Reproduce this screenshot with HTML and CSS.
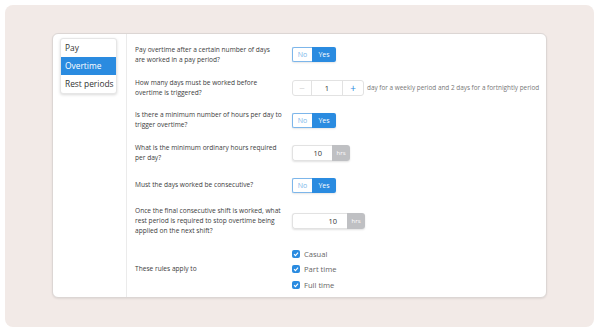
FILE: index.html
```html
<!DOCTYPE html>
<html lang="en">

<head>
    <meta charset="UTF-8">
    <meta name="viewport" content="width=device-width, initial-scale=1.0">
    <title>Overtime rules</title>
    <link rel="stylesheet" href="styles.css">
</head>

<body>

    <div class="panel">
        <div class="card">
            <div class="sidebar">
                <div class="menu">
                    <a class="menu_item">Pay</a>
                    <a class="menu_item active">Overtime</a>
                    <a class="menu_item">Rest periods</a>
                </div>
            </div>

            <div class="content">
                <div class="row row-1">
                    <p class="question">Pay overtime after a certain number of days<br>are worked in a pay period?</p>
                    <div class="toggle">
                        <span class="toggle_no">No</span>
                        <span class="toggle_yes">Yes</span>
                    </div>
                </div>

                <div class="row row-2">
                    <p class="question">How many days must be worked before overtime is triggered?</p>
                    <div class="stepper">
                        <span class="step_btn minus">&minus;</span>
                        <span class="step_value">1</span>
                        <span class="step_btn plus">+</span>
                    </div>
                    <span class="hint">day for a weekly period and 2 days for a fortnightly period</span>
                </div>

                <div class="row row-3">
                    <p class="question">Is there a minimum number of hours per day to trigger overtime?</p>
                    <div class="toggle">
                        <span class="toggle_no">No</span>
                        <span class="toggle_yes">Yes</span>
                    </div>
                </div>

                <div class="row row-4">
                    <p class="question">What is the minimum ordinary hours required per day?</p>
                    <div class="hours">
                        <span class="hours_value">10</span>
                        <span class="hours_unit">hrs</span>
                    </div>
                </div>

                <div class="row row-5">
                    <p class="question">Must the days worked be consecutive?</p>
                    <div class="toggle">
                        <span class="toggle_no">No</span>
                        <span class="toggle_yes">Yes</span>
                    </div>
                </div>

                <div class="row row-6">
                    <p class="question">Once the final consecutive shift is worked, what rest period is required to stop overtime being applied on the next shift?</p>
                    <div class="hours wide">
                        <span class="hours_value">10</span>
                        <span class="hours_unit">hrs</span>
                    </div>
                </div>

                <div class="row row-7">
                    <p class="question">These rules apply to</p>
                    <div class="checks">
                        <label class="check"><span class="box"><svg viewBox="0 0 10 10"><path d="M2.5 5.2 L4.3 7 L7.6 3.3" /></svg></span>Casual</label>
                        <label class="check"><span class="box"><svg viewBox="0 0 10 10"><path d="M2.5 5.2 L4.3 7 L7.6 3.3" /></svg></span>Part time</label>
                        <label class="check"><span class="box"><svg viewBox="0 0 10 10"><path d="M2.5 5.2 L4.3 7 L7.6 3.3" /></svg></span>Full time</label>
                    </div>
                </div>
            </div>
        </div>
    </div>

</body>

</html>
```

FILE: styles.css
```css
body {
    font-family: "Open Sans", "DejaVu Sans", sans-serif;
    margin: 0;
    padding: 0;
    background-color: #ffffff;
}

.panel {
    margin: 5px;
    width: 589px;
    height: 322px;
    box-sizing: border-box;
    padding: 28px 0 0 47px;
    background-color: #f2eae7;
    border-radius: 8px;
}

.card {
    display: flex;
    width: 495px;
    height: 265px;
    box-sizing: border-box;
    background-color: #ffffff;
    border: 1px solid #dcd6d4;
    border-radius: 6px;
    box-shadow: 0 1px 2px rgba(0, 0, 0, 0.08);
}

.sidebar {
    width: 74px;
    flex-shrink: 0;
    border-right: 1px solid #ebebeb;
    padding: 4px 0 0 7px;
    box-sizing: border-box;
}

.menu {
    display: flex;
    flex-direction: column;
    width: 55px;
    background-color: #ffffff;
    border: 1px solid #e6e6e6;
    border-radius: 3px;
    box-shadow: 0 1px 3px rgba(0, 0, 0, 0.15);
}

.menu_item {
    height: 18px;
    line-height: 18px;
    padding-left: 4px;
    font-size: 8.4px;
    color: #333;
}

.menu_item.active {
    background-color: #2a8be0;
    color: #ffffff;
}

.content {
    flex: 1;
    padding: 4px 0 0 8px;
}

.row {
    display: flex;
    align-items: center;
    height: 32px;
}

.row-1 {
    height: 33px;
}

.row-2,
.row-4 {
    height: 33px;
}

.row-6 {
    height: 40px;
}

.row-7 {
    height: 56px;
}

.question {
    width: 157px;
    flex-shrink: 0;
    margin: 0;
    padding-right: 8px;
    box-sizing: border-box;
    font-size: 6.6px;
    line-height: 10px;
    color: #3c3c3c;
}

.toggle {
    display: flex;
    height: 15px;
    border-radius: 2px;
    box-shadow: 0 1px 2px rgba(0, 0, 0, 0.1);
    font-size: 7px;
}

.toggle_no {
    width: 19px;
    line-height: 13px;
    text-align: center;
    color: #7db6ea;
    border: 1px solid #7db6ea;
    border-right: none;
    border-radius: 2px 0 0 2px;
}

.toggle_yes {
    width: 24px;
    line-height: 15px;
    text-align: center;
    color: #ffffff;
    background-color: #2a8be0;
    border-radius: 0 2px 2px 0;
}

.stepper {
    display: flex;
    height: 16px;
    border: 1px solid #e2e2e2;
    border-radius: 3px;
    box-sizing: border-box;
}

.step_btn {
    width: 18px;
    line-height: 14px;
    text-align: center;
    font-size: 10px;
}

.minus {
    color: #d6d6d6;
}

.plus {
    width: 20px;
    color: #2a8be0;
    border-left: 1px solid #e2e2e2;
}

.step_value {
    width: 30px;
    line-height: 14px;
    text-align: center;
    font-size: 7.5px;
    color: #333;
    border-left: 1px solid #e2e2e2;
}

.hint {
    margin-left: 3px;
    font-size: 6.4px;
    color: #777;
    white-space: nowrap;
}

.hours {
    display: flex;
    height: 16px;
    border-radius: 3px;
    box-shadow: 0 1px 2px rgba(0, 0, 0, 0.12);
}

.hours_value {
    width: 40px;
    box-sizing: border-box;
    padding-right: 10px;
    line-height: 14px;
    text-align: right;
    font-size: 7.5px;
    color: #333;
    border: 1px solid #e2e2e2;
    border-right: none;
    border-radius: 3px 0 0 3px;
}

.wide .hours_value {
    width: 55px;
}

.hours_unit {
    width: 18px;
    line-height: 16px;
    text-align: center;
    font-size: 6px;
    color: #ffffff;
    background-color: #bfc0c3;
    border-radius: 0 3px 3px 0;
}

.checks {
    display: flex;
    flex-direction: column;
    gap: 6.5px;
}

.check {
    display: flex;
    align-items: center;
    gap: 4px;
    height: 9px;
    font-size: 7.6px;
    color: #666;
}

.box {
    width: 8px;
    height: 8px;
    border-radius: 2px;
    background-color: #2a8be0;
}

.box svg {
    display: block;
    width: 8px;
    height: 8px;
    fill: none;
    stroke: #ffffff;
    stroke-width: 1.4;
}
```
